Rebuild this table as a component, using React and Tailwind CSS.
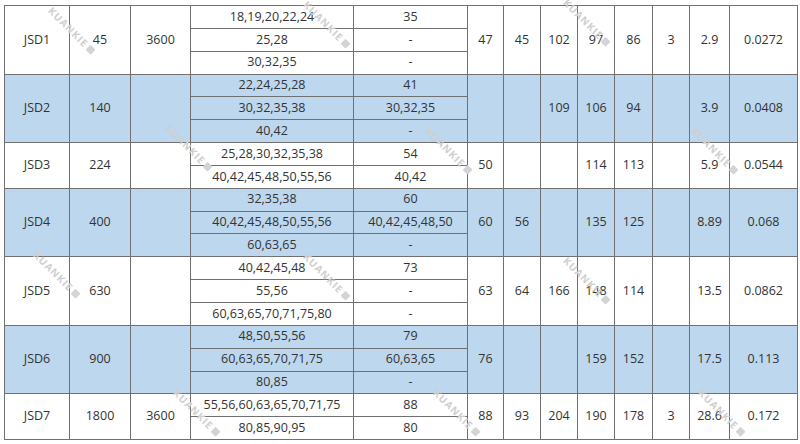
const groups = [
  {
    name: "JSD1",
    power: "45",
    speed: "3600",
    bores: ["18,19,20,22,24", "25,28", "30,32,35"],
    alt: ["35", "-", "-"],
    rest: ["47", "45", "102", "97", "86", "3", "2.9", "0.0272"],
    blue: false,
  },
  {
    name: "JSD2",
    power: "140",
    speed: "",
    bores: ["22,24,25,28", "30,32,35,38", "40,42"],
    alt: ["41", "30,32,35", "-"],
    rest: ["", "", "109", "106", "94", "", "3.9", "0.0408"],
    blue: true,
  },
  {
    name: "JSD3",
    power: "224",
    speed: "",
    bores: ["25,28,30,32,35,38", "40,42,45,48,50,55,56"],
    alt: ["54", "40,42"],
    rest: ["50", "", "", "114", "113", "", "5.9", "0.0544"],
    blue: false,
  },
  {
    name: "JSD4",
    power: "400",
    speed: "",
    bores: ["32,35,38", "40,42,45,48,50,55,56", "60,63,65"],
    alt: ["60", "40,42,45,48,50", "-"],
    rest: ["60", "56", "", "135", "125", "", "8.89", "0.068"],
    blue: true,
  },
  {
    name: "JSD5",
    power: "630",
    speed: "",
    bores: ["40,42,45,48", "55,56", "60,63,65,70,71,75,80"],
    alt: ["73", "-", "-"],
    rest: ["63", "64", "166", "148", "114", "", "13.5", "0.0862"],
    blue: false,
  },
  {
    name: "JSD6",
    power: "900",
    speed: "",
    bores: ["48,50,55,56", "60,63,65,70,71,75", "80,85"],
    alt: ["79", "60,63,65", "-"],
    rest: ["76", "", "", "159", "152", "", "17.5", "0.113"],
    blue: true,
  },
  {
    name: "JSD7",
    power: "1800",
    speed: "3600",
    bores: ["55,56,60,63,65,70,71,75", "80,85,90,95"],
    alt: ["88", "80"],
    rest: ["88", "93", "204", "190", "178", "3", "28.6", "0.172"],
    blue: false,
  },
];

const marks = [
  [75, 30], [330, 24], [590, 22],
  [192, 147], [452, 150], [718, 150],
  [60, 274], [330, 276], [590, 280],
  [200, 412], [460, 412], [725, 412],
];

function Watermark({ x, y }) {
  return (
    <div
      className="pointer-events-none absolute flex items-center gap-[2px] whitespace-nowrap text-[10px] font-bold tracking-[1px] text-[#cfcfcf] rotate-45"
      style={{ left: x - 34, top: y - 7 }}
    >
      KUANKIE
      <span className="inline-block h-[7px] w-[7px] rounded-[1px] bg-[#d4d4d4]" />
    </div>
  );
}

export default function App() {
  const cell = "border border-[#707070] text-center align-middle p-0 leading-none";

  return (
    <div className="relative h-[444px] w-[800px] overflow-hidden bg-white font-['Open_Sans',sans-serif] text-[12.5px] text-[#333]">
      <div className="pl-[4px] pt-[5px]">
        <table className="w-[793px] table-fixed border-collapse">
          <colgroup>
            <col className="w-[65px]" />
            <col className="w-[61px]" />
            <col className="w-[60px]" />
            <col className="w-[163px]" />
            <col className="w-[114px]" />
            <col className="w-[36px]" />
            <col className="w-[37px]" />
            <col className="w-[37px]" />
            <col className="w-[37px]" />
            <col className="w-[38px]" />
            <col className="w-[37px]" />
            <col className="w-[40px]" />
            <col className="w-[68px]" />
          </colgroup>
          <tbody>
            {groups.map((g) => {
              const n = g.bores.length;
              const bg = g.blue ? "bg-[#bdd7ee]" : "bg-white";
              return g.bores.map((bore, i) => (
                <tr key={g.name + i} className={`h-[22.85px] ${bg}`}>
                  {i === 0 && (
                    <>
                      <td rowSpan={n} className={cell}>{g.name}</td>
                      <td rowSpan={n} className={cell}>{g.power}</td>
                      <td rowSpan={n} className={cell}>{g.speed}</td>
                    </>
                  )}
                  <td className={cell}>{bore}</td>
                  <td className={cell}>{g.alt[i]}</td>
                  {i === 0 &&
                    g.rest.map((v, k) => (
                      <td key={k} rowSpan={n} className={cell}>
                        {v}
                      </td>
                    ))}
                </tr>
              ));
            })}
          </tbody>
        </table>
      </div>
      {marks.map(([x, y]) => (
        <Watermark key={`${x}-${y}`} x={x} y={y} />
      ))}
    </div>
  );
}
